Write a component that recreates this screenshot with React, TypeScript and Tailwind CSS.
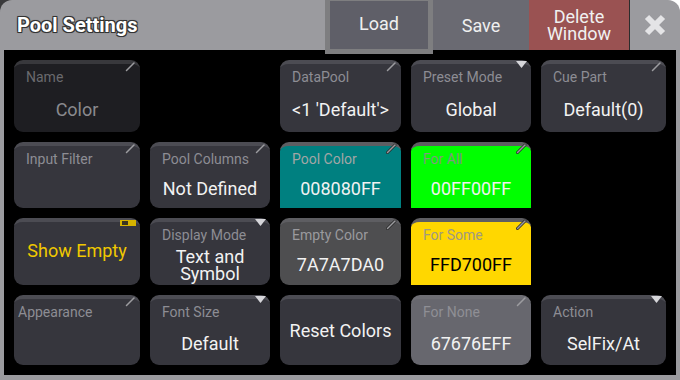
import React from "react";

type Corner = "pencil" | "drop" | "toggle" | "none";

function CornerMark({ kind, dark }: { kind: Corner; dark?: boolean }) {
  if (kind === "pencil") {
    return (
      <svg className="absolute -top-[3px] right-[4px]" width="11" height="11" viewBox="0 0 11 11">
        {dark && <line x1="1.5" y1="9.5" x2="9" y2="2" stroke="#2a2a2a" strokeWidth="3" strokeLinecap="round" />}
        <line x1="1.5" y1="9.5" x2="9" y2="2" stroke="#9c9ca0" strokeWidth="1.5" strokeLinecap="round" />
      </svg>
    );
  }
  if (kind === "drop") {
    return (
      <svg className="absolute -top-[3px] right-[4px]" width="11" height="7" viewBox="0 0 11 7">
        <polygon points="0,0 11,0 5.5,7" fill="#d6d6da" />
      </svg>
    );
  }
  if (kind === "toggle") {
    return (
      <div className="absolute -top-[2px] right-[4px] flex h-[6px] w-[16px] items-center bg-[#d6b400] pl-[2px]">
        <div className="h-[4px] w-[6px] bg-[#3a3520]" />
      </div>
    );
  }
  return null;
}

type CellProps = {
  label?: string;
  value?: React.ReactNode;
  corner?: Corner;
  bg?: string;
  labelClass?: string;
  valueClass?: string;
  darkPencil?: boolean;
};

function Cell({
  label,
  value,
  corner = "none",
  bg = "bg-[#36363d] border-[#4c4c53] rounded-[9px]",
  labelClass = "text-[#8d8d94] pl-[12px]",
  valueClass = "text-[#f2f2f2]",
  darkPencil,
}: CellProps) {
  return (
    <div className={`relative flex flex-col border-t-[4px] ${bg}`}>
      <CornerMark kind={corner} dark={darkPencil} />
      {label && <div className={`pt-[4px] text-[14px] leading-[18px] ${labelClass}`}>{label}</div>}
      <div className={`flex flex-1 items-center justify-center text-center text-[18px] leading-[17px] ${valueClass}`}>
        {value}
      </div>
    </div>
  );
}

export default function App() {
  return (
    <div className="flex h-[380px] w-[680px] flex-col bg-white font-['Roboto',sans-serif]">
      <div className="flex h-[50px] shrink-0">
        <div className="flex-1 bg-[#3a3a3c]">
          <div className="flex h-full items-center rounded-tl-[12px] bg-[#9b9b9f] pl-[17px]">
            <span className="text-[20px] font-bold text-white [text-shadow:-1px_-1px_0_#333,1px_-1px_0_#333,-1px_1px_0_#333,1px_1px_0_#333,0_0_2px_#222]">
              Pool Settings
            </span>
          </div>
        </div>
        <div className="relative z-10 flex h-[54px] w-[108px] items-center justify-center border-x-[5px] border-t-[1px] border-b-[5px] border-[#7e7e80] bg-[#5f5f68] pb-[3px] text-[18px] text-[#f0f0f0]">
          Load
        </div>
        <div className="flex w-[96px] items-center justify-center bg-[#6a6a72] text-[18px] text-[#f0f0f0]">
          Save
        </div>
        <div className="flex w-[100px] items-center justify-center bg-[#9a5252] text-center text-[18px] leading-[17px] text-[#f0f0f0]">
          Delete
          <br />
          Window
        </div>
        <div className="w-[1px] bg-[#2c2c2c]" />
        <div className="w-[50px] bg-white">
          <div className="flex h-full items-center justify-center rounded-tr-[12px] bg-[#9b9b9f]">
            <svg width="24" height="24" viewBox="0 0 24 24">
              <path d="M4 4 L20 20 M20 4 L4 20" stroke="#e4e4e6" strokeWidth="6" />
            </svg>
          </div>
        </div>
      </div>
      <div className="flex flex-1 bg-[#9b9b9f] px-[4px] pb-[5px]">
        <div className="grid flex-1 grid-cols-[126px_120px_121px_120px_125px] grid-rows-[72px_66px_67px_70px] gap-[10px] bg-black px-[10px] py-[10px]">
          <Cell
            label="Name"
            value="Color"
            corner="pencil"
            bg="bg-[#1e1e22] border-[#38383c] rounded-[9px]"
            labelClass="text-[#6a6a6e] pl-[12px]"
            valueClass="text-[#8a8a8e]"
          />
          <div />
          <Cell label="DataPool" value="<1 'Default'>" corner="pencil" />
          <Cell label="Preset Mode" value="Global" corner="drop" />
          <Cell label="Cue Part" value="Default(0)" corner="pencil" />

          <Cell label="Input Filter" corner="pencil" />
          <Cell label="Pool Columns" value="Not Defined" corner="pencil" />
          <Cell
            label="Pool Color"
            value="008080FF"
            corner="pencil"
            darkPencil
            bg="bg-[#008080] border-[#5e5e62] rounded-t-[9px]"
            labelClass="text-[#a2a6a6] pl-[12px]"
          />
          <Cell
            label="For All"
            value="00FF00FF"
            corner="pencil"
            darkPencil
            bg="bg-[#00ff00] border-[#5e5e62] rounded-t-[9px]"
            labelClass="text-[#7f9a7f] pl-[12px]"
          />
          <div />

          <Cell value={<span className="pb-[6px]">Show Empty</span>} corner="toggle" valueClass="text-[#f0c800]" />
          <Cell
            label="Display Mode"
            value={
              <span className="leading-[17px]">
                Text and
                <br />
                Symbol
              </span>
            }
            corner="drop"
          />
          <Cell
            label="Empty Color"
            value="7A7A7DA0"
            corner="pencil"
            darkPencil
            bg="bg-[#4e4e50] border-[#5e5e62] rounded-[9px]"
            labelClass="text-[#9a9a9e] pl-[12px]"
          />
          <Cell
            label="For Some"
            value="FFD700FF"
            corner="pencil"
            darkPencil
            bg="bg-[#ffd700] border-[#5e5e62] rounded-t-[9px]"
            labelClass="text-[#a09a80] pl-[12px]"
            valueClass="text-black"
          />
          <div />

          <Cell label="Appearance" corner="pencil" labelClass="text-[#8d8d94] pl-[4px]" />
          <Cell label="Font Size" value="Default" corner="drop" />
          <Cell value={<span className="pb-[3px]">Reset Colors</span>} />
          <Cell
            label="For None"
            value="67676EFF"
            corner="pencil"
            bg="bg-[#67676e] border-[#6e6e74] rounded-[9px]"
            labelClass="text-[#8f8f95] pl-[12px]"
          />
          <Cell label="Action" value="SelFix/At" corner="drop" />
        </div>
      </div>
    </div>
  );
}
